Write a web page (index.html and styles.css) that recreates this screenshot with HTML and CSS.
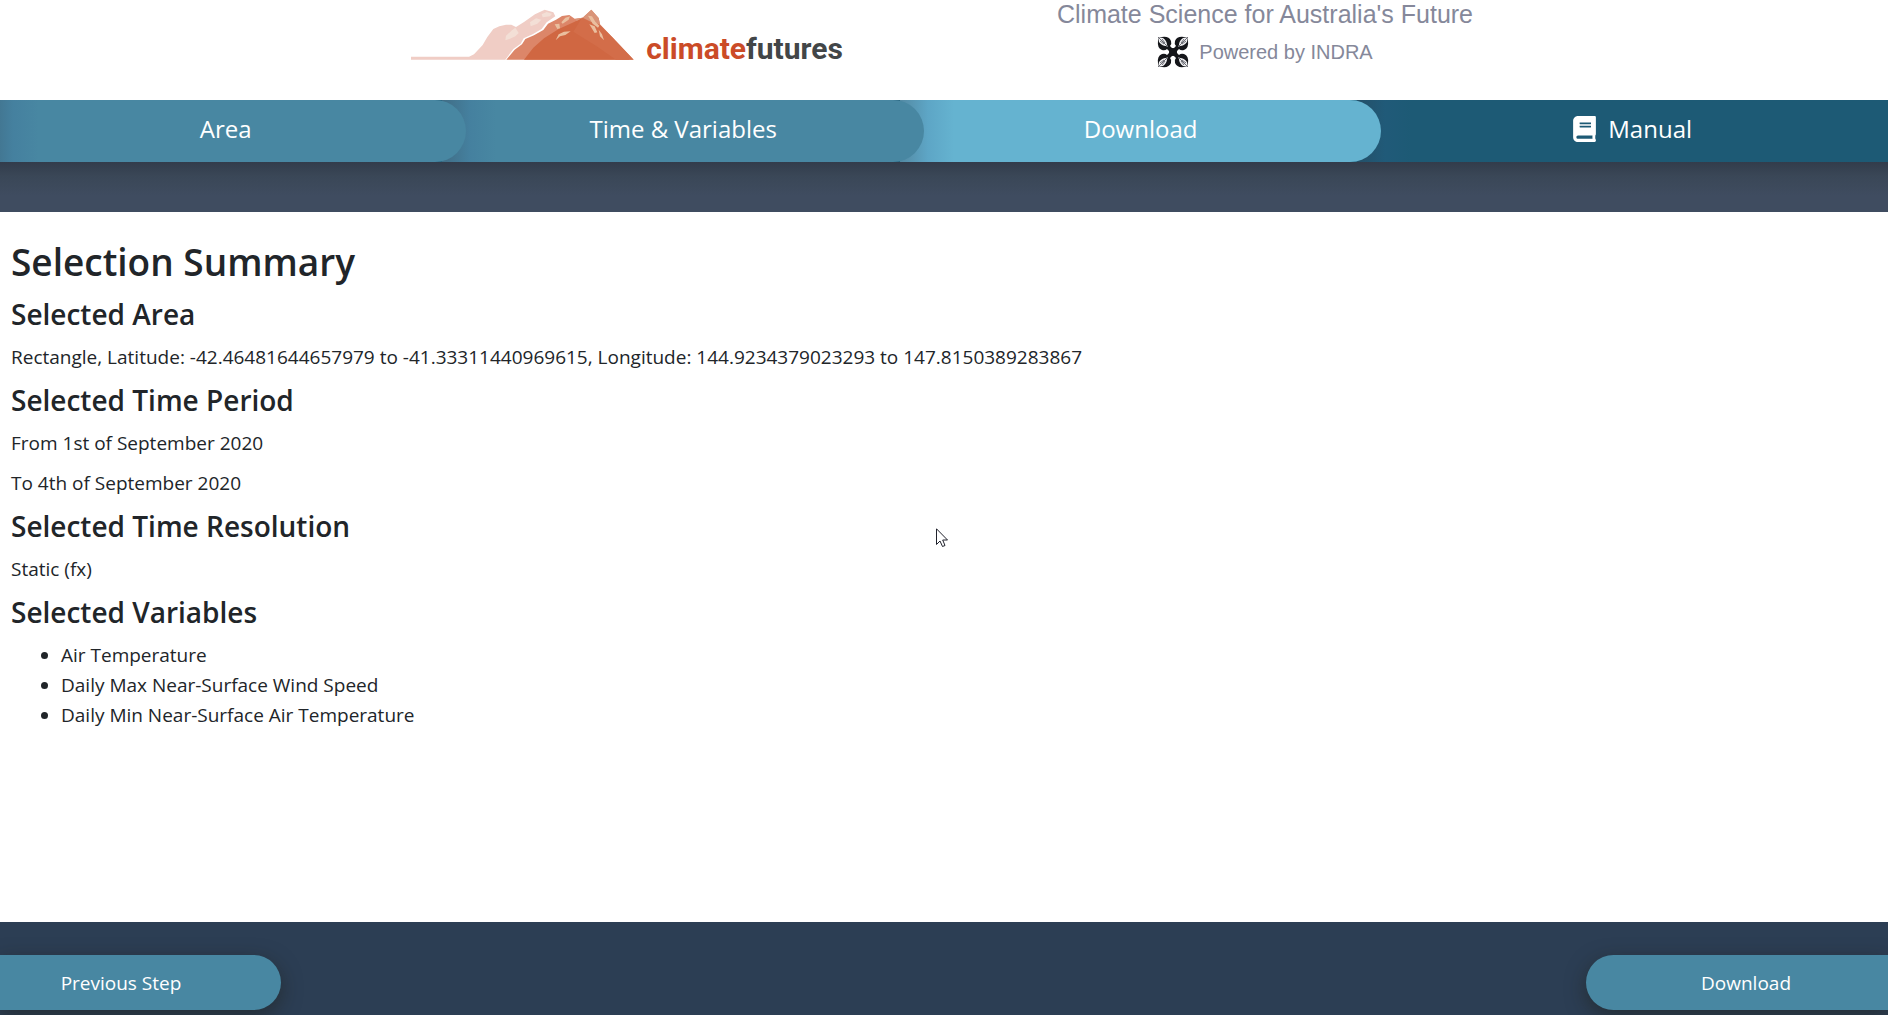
FILE: index.html
```html
<!DOCTYPE html>
<html lang="en">
<head>
<meta charset="utf-8">
<meta name="viewport" content="width=device-width, initial-scale=1">
<title>Climate Futures - Download</title>
<link rel="stylesheet" href="styles.css">
</head>
<body>
<header class="site-header">
  <div class="brand">
    <svg class="brand-mountains" viewBox="33 28 669 153" aria-hidden="true">
      <path fill="#f0cdc5" d="M33 171H207L222 164L248 136L262 112L280 88L298 80L318 75H334L348 82L372 67L405 44L434 30L460 38L466 50L440 68L425 88L398 104L371 116L362 132L340 148L316 180H33z"/>
      <path fill="#f3dfd6" d="M425 44L440 37L456 42L450 50L428 53zM390 68L408 56L424 60L412 72L392 80zM318 108L336 92L346 84L356 100L346 110L330 117L316 122z"/>
      <path fill="#dc8669" d="M319 180L344 150L366 134L376 118L402 107L430 91L444 72L468 60L486 49L508 46L524 57L548 54L574 30L596 55L600 74L640 116L701 180z"/>
      <path fill="#d06742" d="M372 180L400 144L432 116L476 88L524 66L546 54L562 60L574 84L600 108L622 128L650 158L690 180z"/>
      <path fill="#d36d49" d="M546 54L574 60L600 76L640 116L701 180H648L590 140L520 96z"/>
      <path fill="#d99478" d="M526 58L548 54L574 30L596 55L600 74L572 66L548 54L530 64z"/>
      <path fill="#eabf9f" d="M484 68L496 54L510 50L506 60L488 72zM464 74L478 72L480 86L472 88zM564 48L576 50L586 66L598 78L594 84L578 72zM568 74L584 80L592 98L584 100zM596 90L606 104L612 122L600 110zM467 122L476 104L492 96L512 95L496 106L480 110z"/>
    </svg>
    <span class="brand-name"><span class="brand-climate">climate</span>futures</span>
  </div>
  <div class="tagline">
    <p class="tagline-main">Climate Science for Australia's Future</p>
    <p class="tagline-powered">
      <svg class="indra" viewBox="0 0 32 32" aria-hidden="true">
        <defs>
          <g id="petal">
            <path fill="#15161a" d="M1 1L5 1Q12 0 14 5Q15 8 13 10L16 13V16H13L10 13Q8 15 5 14Q0 12 1 5z"/>
            <path fill="#f1f1f3" d="M1 1L6 2Q10 5 10 9L11 11L9 10Q5 10 2 6z"/>
            <path stroke="#6b6c74" fill="none" d="M1 1L11 11M5 3L8 7M3 5L7 8"/>
          </g>
        </defs>
        <use href="#petal"/>
        <use href="#petal" transform="rotate(90 16 16)"/>
        <use href="#petal" transform="rotate(180 16 16)"/>
        <use href="#petal" transform="rotate(270 16 16)"/>
        <circle cx="16" cy="16" r="4" fill="#15161a"/>
      </svg>
      Powered by INDRA
    </p>
  </div>
</header>
<nav class="steps" aria-label="Steps">
  <a class="step" href="#area">Area</a>
  <a class="step" href="#time">Time &amp; Variables</a>
  <a class="step step-current" href="#download" aria-current="step">Download</a>
  <a class="step step-manual" href="#manual">
    <svg class="book" viewBox="0 0 448 512" aria-hidden="true">
      <path fill="#fff" fill-rule="evenodd" d="M448 360V24c0-13.300-10.700-24-24-24H96C43 0 0 43 0 96v320c0 53 43 96 96 96h328c13.300 0 24-10.700 24-24v-16c0-7.500-3.500-14.300-8.900-18.700-4.200-15.400-4.200-59.300 0-74.700 5.400-4.300 8.900-11.100 8.900-18.600zM128 134c0-3.300 2.700-6 6-6h212c3.300 0 6 2.700 6 6v20c0 3.300-2.700 6-6 6H134c-3.300 0-6-2.700-6-6v-20zm0 64c0-3.300 2.700-6 6-6h212c3.300 0 6 2.700 6 6v20c0 3.300-2.700 6-6 6H134c-3.300 0-6-2.700-6-6v-20zm253.400 250H96c-17.700 0-32-14.300-32-32 0-17.600 14.400-32 32-32h285.400c-1.900 17.100-1.900 46.900 0 64z"/>
    </svg>
    Manual
  </a>
</nav>
<div class="band"></div>
<main class="summary">
  <h1>Selection Summary</h1>
  <h2>Selected Area</h2>
  <p>Rectangle, Latitude: -42.46481644657979 to -41.33311440969615, Longitude: 144.9234379023293 to 147.8150389283867</p>
  <h2>Selected Time Period</h2>
  <p>From 1st of September 2020</p>
  <p>To 4th of September 2020</p>
  <h2>Selected Time Resolution</h2>
  <p>Static (fx)</p>
  <h2>Selected Variables</h2>
  <ul>
    <li>Air Temperature</li>
    <li>Daily Max Near-Surface Wind Speed</li>
    <li>Daily Min Near-Surface Air Temperature</li>
  </ul>
</main>
<footer class="actions">
  <button class="action action-previous" type="button">Previous Step</button>
  <button class="action action-download" type="button">Download</button>
</footer>
<svg class="pointer" viewBox="0 0 12 20" aria-hidden="true">
  <path fill="#fff" stroke="#20222c" d="M.5 .8V16.500L4 13L6.500 18.500L9 17.500L6.700 12H11.500z"/>
</svg>
</body>
</html>
```

FILE: styles.css
```css
* {
  box-sizing: border-box;
}

body {
  display: flex;
  flex-direction: column;
  min-height: 100vh;
  margin: 0;
  background: #fff;
  color: #212529;
  font-family: "Open Sans", "Noto Sans", sans-serif;
  font-size: 19px;
  line-height: 30px;
}

h1,
h2,
p,
ul {
  margin: 0 0 10px;
}

.site-header {
  display: grid;
  grid-template-columns: 1fr 1fr;
  width: 100%;
  max-width: 1280px;
  height: 100px;
  margin: 0 auto;
  padding-left: 4px;
}

.brand {
  display: flex;
  align-items: flex-start;
  justify-content: center;
  gap: 12px;
  padding-top: 9px;
}

.brand-mountains {
  width: 223px;
  height: 51px;
}

.brand-name {
  padding-top: 20px;
  color: #424648;
  font-family: Roboto, sans-serif;
  font-size: 30px;
  font-weight: 700;
  line-height: 40px;
}

.brand-climate {
  color: #cb4b27;
}

.tagline {
  color: #85889a;
  font-family: "Liberation Sans", Arial, sans-serif;
  text-align: center;
}

.tagline-main {
  margin: 0 0 8px;
  font-size: 25px;
  line-height: 28px;
}

.tagline-powered {
  display: flex;
  align-items: center;
  justify-content: center;
  gap: 10px;
  margin: 0;
  font-size: 20px;
}

.indra {
  width: 32px;
  height: 32px;
}

.steps {
  display: flex;
  height: 62px;
  overflow: hidden;
  background: #1d5a75;
}

.step {
  display: flex;
  flex: none;
  align-items: center;
  justify-content: center;
  width: 25.5%;
  margin-left: -24px;
  padding-bottom: 4px;
  border-radius: 0 31px 31px 0;
  background: linear-gradient(90deg, rgba(50, 60, 80, 0.35), rgba(50, 90, 140, 0.15) 28px, transparent 54px) #4887a2;
  color: #fff;
  font-size: 24px;
  text-decoration: none;
}

.step:nth-child(1) {
  z-index: 4;
  margin-left: -15px;
}

.step:nth-child(2) {
  z-index: 3;
}

.step-current {
  z-index: 2;
  background-color: #65b3d0;
}

.step-manual {
  flex: 1;
  gap: 12px;
  margin-right: -20px;
  border-radius: 0;
  background-color: #1d5a75;
}

.book {
  width: 23px;
  height: 26px;
}

.band {
  height: 50px;
  background: linear-gradient(#323c4b, #3a4757 14px, #3f4c60 34px);
}

.summary {
  flex: 1;
  padding: 26px 11px;
}

h1 {
  font-size: 37px;
  font-weight: 600;
  line-height: 48px;
}

h2 {
  font-size: 28px;
  font-weight: 600;
  line-height: 36px;
}

ul {
  padding-left: 50px;
}

.actions {
  display: flex;
  justify-content: space-between;
  padding: 33px 0 5px;
  overflow: hidden;
  background: #2c3e54;
}

.action {
  height: 55px;
  border: 0;
  background: #4887a2;
  box-shadow: 0 6px 20px rgba(30, 30, 20, 0.5);
  color: #fff;
  font: inherit;
}

.action-previous {
  width: 281px;
  padding: 0 39px 0 0;
  border-radius: 0 28px 28px 0;
}

.action-download {
  width: 302px;
  padding: 0 0 0 18px;
  border-radius: 28px 0 0 28px;
}

.pointer {
  position: absolute;
  top: 52%;
  left: 936px;
  width: 12px;
  height: 20px;
}
```
